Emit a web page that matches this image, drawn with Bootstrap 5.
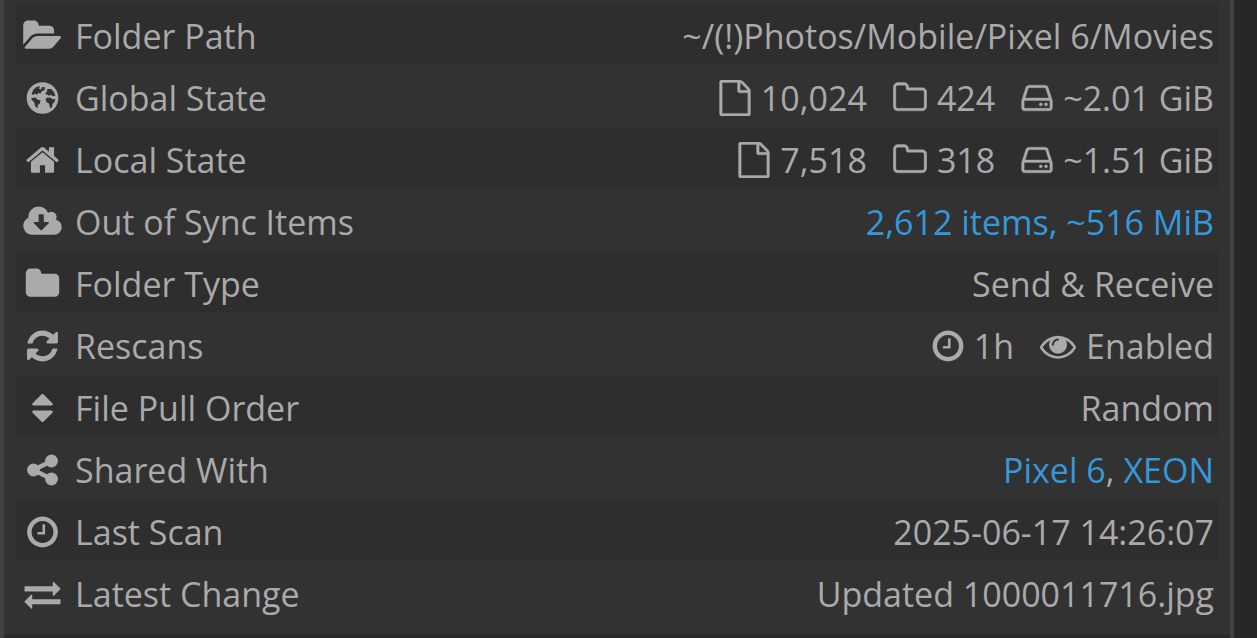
<!DOCTYPE html>
<html lang="en">
<head>
<meta charset="utf-8">
<meta name="viewport" content="width=device-width, initial-scale=1">
<title>Folder details</title>
<link href="https://cdn.jsdelivr.net/npm/bootstrap@5.3.0/dist/css/bootstrap.min.css" rel="stylesheet">
<style>
body { background: #272727; color: #aaa; font-family: "Open Sans", sans-serif; font-size: 34px; line-height: 46px; overflow: hidden; }
.folder-panel { background: #323232; border: solid #424242; border-width: 0 4px; margin-right: 23px; padding: 3px 11px 12px; }
.folder-panel + .panel-foot { border: solid #424242; border-width: 0 4px; margin-right: 23px; height: 4px; background: #2a2a2a; }
.details { --bs-table-color: #aaa; --bs-table-bg: transparent; --bs-table-striped-color: #aaa; --bs-table-striped-bg: #2e2e2e; color: #aaa; }
.details > :not(caption) > * > * { border: 0; padding: 10px 5px 6px; font-weight: 400; white-space: nowrap; }
.details > tbody > tr > th { padding-left: 8px; }
.details a { color: #3498db; text-decoration: none; }
.details svg { height: 36px; fill: currentColor; flex: none; }
.row-icon { width: 39px; margin-right: 13px; }
.stats { gap: 26px; }
.stats span { gap: 10px; }
.outlined { stroke: currentColor; stroke-width: 20px; }
</style>
</head>
<body>
<svg class="d-none" aria-hidden="true">
<symbol id="folder-open" viewBox="0 0 1920 1792"><path d="M1879 952q0 31-31 66l-336 396q-43 51-120.5 86.5t-143.5 35.5h-1088q-34 0-60.5-13t-26.5-43q0-31 31-66l336-396q43-51 120.5-86.5t143.5-35.5h1088q34 0 60.5 13t26.5 43zm-343-344v160h-832q-94 0-197 47.5t-164 119.5l-337 396-5 6q0-4-.5-12.5t-.5-12.5v-960q0-92 66-158t158-66h320q92 0 158 66t66 158v32h544q92 0 158 66t66 158z"/></symbol>
<symbol id="globe" viewBox="0 0 36 36"><path fill-rule="evenodd" d="M18 2.200a15.800 15.800 0 1 0 0 31.600a15.800 15.800 0 1 0 0-31.600zM7 14L9 9.500 12 7 15.500 6.200 14.500 9 16.500 9.500 17.500 7 20.500 7.300 20 10 17 11.500 16 13.500 13.500 13 12.500 15 10.500 13.500 9 15zM6.500 18.300L11 17.600 13 19.500 16 20.500 15.300 23.500 13.300 25 13 28.500 10.500 26 10 22.500 8 20.800zM20.500 14L22.500 11.200 23 9 26.500 9 29 11.500 31 15.500 28.500 16.300 26.500 14.800 24.500 15.800 22.500 14.500zM21 19L23 17.500 26 17.800 28 19.300 30.800 19 30 22 28 24 27.500 27.500 25.500 28 24.500 23.500 22 22.300z"/></symbol>
<symbol id="home" viewBox="0 0 1792 1792"><path d="M1472 992v480q0 26-19 45t-45 19h-384v-384h-256v384h-384q-26 0-45-19t-19-45v-480q0-1 .5-3t.5-3l575-474 575 474q1 2 1 6zm223-69l-62 74q-8 9-21 11h-3q-13 0-21-7l-692-577-692 577q-12 8-24 7-13-2-21-11l-62-74q-8-10-7-23.5t11-21.5l719-599q32-26 76-26t76 26l244 204v-195q0-14 9-23t23-9h192q14 0 23 9t9 23v408l219 182q10 8 11 21.5t-7 23.5z"/></symbol>
<symbol id="cloud" viewBox="-64 0 1920 1792"><path d="M1216 928q0-14-9-23t-23-9h-224v-352q0-13-9.500-22.500t-22.500-9.500h-192q-13 0-22.500 9.500t-9.500 22.500v352h-224q-13 0-22.500 9.500t-9.500 22.500q0 14 9 23l352 352q9 9 23 9t23-9l351-351q10-12 10-24zm640 224q0 159-112.500 271.500t-271.500 112.500h-1088q-185 0-316.500-131.500t-131.500-316.500q0-130 70-240t188-165q-2-30-2-43 0-212 150-362t362-150q156 0 285.500 87t188.500 231q71-62 166-62 106 0 181 75t75 181q0 76-41 138 130 31 213.500 135.500t83.500 238.500z"/></symbol>
<symbol id="folder" viewBox="0 0 1792 1792"><path d="M1728 608v704q0 92-66 158t-158 66h-1216q-92 0-158-66t-66-158v-960q0-92 66-158t158-66h320q92 0 158 66t66 158v32h672q92 0 158 66t66 158z"/></symbol>
<symbol id="refresh" viewBox="0 0 1792 1792"><path d="M1639 1056q0 5-1 7-64 268-268 434.500t-478 166.500q-146 0-282.500-55t-243.500-157l-129 129q-19 19-45 19t-45-19-19-45v-448q0-26 19-45t45-19h448q26 0 45 19t19 45-19 45l-137 137q71 66 161 102t187 36q134 0 250-65t186-179q11-17 53-117 8-23 30-23h192q13 0 22.500 9.500t9.500 22.500zm25-800v448q0 26-19 45t-45 19h-448q-26 0-45-19t-19-45 19-45l138-138q-148-137-349-137-134 0-250 65t-186 179q-11 17-53 117-8 23-30 23h-199q-13 0-22.500-9.500t-9.500-22.500v-7q65-268 270-434.500t480-166.500q146 0 284 55.500t245 156.500l130-129q19-19 45-19t45 19 19 45z"/></symbol>
<symbol id="sort" viewBox="0 0 1792 1792"><path d="M1408 1088q0 26-19 45l-448 448q-19 19-45 19t-45-19l-448-448q-19-19-19-45t19-45 45-19h896q26 0 45 19t19 45zm0-384q0 26-19 45t-45 19h-896q-26 0-45-19t-19-45 19-45l448-448q19-19 45-19t45 19l448 448q19 19 19 45z"/></symbol>
<symbol id="share" viewBox="0 0 1792 1792"><path d="M1344 1024q133 0 226.500 93.500t93.500 226.500-93.500 226.500-226.500 93.500-226.500-93.500-93.500-226.500q0-12 2-34l-360-180q-92 86-218 86-133 0-226.500-93.500t-93.500-226.500 93.500-226.500 226.500-93.500q126 0 218 86l360-180q-2-22-2-34 0-133 93.500-226.500t226.500-93.500 226.500 93.500 93.500 226.500-93.500 226.500-226.500 93.500q-126 0-218-86l-360 180q2 22 2 34t-2 34l360 180q92-86 218-86z"/></symbol>
<symbol id="clock" viewBox="128 0 1536 1792"><path d="M1024 544v448q0 14-9 23t-23 9h-320q-14 0-23-9t-9-23v-64q0-14 9-23t23-9h224v-352q0-14 9-23t23-9h64q14 0 23 9t9 23zm416 352q0-148-73-273t-198-198-273-73-273 73-198 198-73 273 73 273 198 198 273 73 273-73 198-198 73-273zm224 0q0 209-103 385.500t-279.500 279.500-385.500 103-385.500-103-279.500-279.500-103-385.500 103-385.500 279.500-279.500 385.500-103 385.500 103 279.500 279.500 103 385.500z"/></symbol>
<symbol id="exchange" viewBox="0 0 1792 1792"><path d="M1792 1184v192q0 13-9.500 22.500t-22.500 9.500h-1376v192q0 13-9.500 22.500t-22.500 9.500q-12 0-24-10l-319-320q-9-9-9-22 0-14 9-23l320-320q9-9 23-9 13 0 22.500 9.500t9.500 22.500v192h1376q13 0 22.500 9.500t9.500 22.500zm0-544q0 14-9 23l-320 320q-9 9-23 9-13 0-22.500-9.500t-9.500-22.500v-192h-1376q-13 0-22.500-9.500t-9.500-22.500v-192q0-13 9.500-22.500t22.500-9.500h1376v-192q0-14 9-23t23-9q12 0 24 10l319 319q9 9 9 23z"/></symbol>
<symbol id="eye" viewBox="0 0 1792 1792"><path d="M1664 960q-152-236-381-353 61 104 61 225 0 185-131.500 316.500t-316.500 131.500-316.500-131.500-131.500-316.500q0-121 61-225-229 117-381 353 133 205 333.500 326.500t434.500 121.500 434.500-121.500 333.500-326.500zm-720-384q0-20-14-34t-34-14q-125 0-214.500 89.500t-89.500 214.500q0 20 14 34t34 14 34-14 14-34q0-86 61-147t147-61q20 0 34-14t14-34zm848 384q0 34-20 69-140 230-376.500 368.500t-499.500 138.500-499.500-139-376.500-368q-20-35-20-69t20-69q140-229 376.500-368t499.500-139 499.500 139 376.500 368q20 35 20 69z"/></symbol>
<symbol id="file-o" viewBox="128 0 1536 1792"><path d="M1596 380q28 28 48 76t20 88v1152q0 40-28 68t-68 28h-1344q-40 0-68-28t-28-68v-1600q0-40 28-68t68-28h896q40 0 88 20t76 48zm-444-244v376h376q-10-29-22-41l-313-313q-12-12-41-22zm384 1528v-1024h-416q-40 0-68-28t-28-68v-416h-768v1536h1280z"/></symbol>
<symbol id="folder-o" viewBox="64 0 1664 1792"><path d="M1600 1312v-704q0-40-28-68t-68-28h-704q-40 0-68-28t-28-68v-64q0-40-28-68t-68-28h-320q-40 0-68 28t-28 68v960q0 40 28 68t68 28h1216q40 0 68-28t28-68zm128-704v704q0 92-66 158t-158 66h-1216q-92 0-158-66t-66-158v-960q0-92 66-158t158-66h320q92 0 158 66t66 158v32h672q92 0 158 66t66 158z"/></symbol>
<symbol id="hdd" viewBox="128 0 1536 1792"><path d="M1168 1216q0 33-23.500 56.500t-56.500 23.500-56.500-23.500-23.500-56.500 23.500-56.500 56.500-23.500 56.500 23.500 23.500 56.500zm256 0q0 33-23.500 56.500t-56.500 23.500-56.500-23.500-23.500-56.500 23.500-56.500 56.500-23.500 56.500 23.500 23.500 56.500zm112 160v-320q0-13-9.500-22.500t-22.500-9.500h-1216q-13 0-22.500 9.500t-9.500 22.500v320q0 13 9.500 22.500t22.500 9.500h1216q13 0 22.500-9.500t9.500-22.500zm-1230-480h1180l-157-482q-4-13-16-21.500t-26-8.500h-782q-14 0-26 8.500t-16 21.500zm1358 160v320q0 66-47 113t-113 47h-1216q-66 0-113-47t-47-113v-320q0-25 16-75l197-606q17-53 63-86t101-33h782q55 0 101 33t63 86l197 606q16 50 16 75z"/></symbol>
</svg>
<main class="folder-panel">
<table class="table table-striped details mb-0">
<tbody>
<tr><th scope="row"><div class="d-flex align-items-center"><svg class="row-icon"><use href="#folder-open"/></svg>Folder Path</div></th><td class="text-end">~/(!)Photos/Mobile/Pixel 6/Movies</td></tr>
<tr><th scope="row"><div class="d-flex align-items-center"><svg class="row-icon"><use href="#globe"/></svg>Global State</div></th><td><div class="stats d-flex justify-content-end"><span class="d-flex align-items-center"><svg class="outlined" width="32"><use href="#file-o"/></svg>10,024</span><span class="d-flex align-items-center"><svg class="outlined" width="34"><use href="#folder-o"/></svg>424</span><span class="d-flex align-items-center"><svg class="outlined" width="32"><use href="#hdd"/></svg>~2.01 GiB</span></div></td></tr>
<tr><th scope="row"><div class="d-flex align-items-center"><svg class="row-icon"><use href="#home"/></svg>Local State</div></th><td><div class="stats d-flex justify-content-end"><span class="d-flex align-items-center"><svg class="outlined" width="32"><use href="#file-o"/></svg>7,518</span><span class="d-flex align-items-center"><svg class="outlined" width="34"><use href="#folder-o"/></svg>318</span><span class="d-flex align-items-center"><svg class="outlined" width="32"><use href="#hdd"/></svg>~1.51 GiB</span></div></td></tr>
<tr><th scope="row"><div class="d-flex align-items-center"><svg class="row-icon"><use href="#cloud"/></svg>Out of Sync Items</div></th><td class="text-end"><a href="#">2,612 items, ~516 MiB</a></td></tr>
<tr><th scope="row"><div class="d-flex align-items-center"><svg class="row-icon"><use href="#folder"/></svg>Folder Type</div></th><td class="text-end">Send &amp; Receive</td></tr>
<tr><th scope="row"><div class="d-flex align-items-center"><svg class="row-icon"><use href="#refresh"/></svg>Rescans</div></th><td><div class="stats d-flex justify-content-end"><span class="d-flex align-items-center"><svg width="32"><use href="#clock"/></svg>1h</span><span class="d-flex align-items-center"><svg width="36"><use href="#eye"/></svg>Enabled</span></div></td></tr>
<tr><th scope="row"><div class="d-flex align-items-center"><svg class="row-icon"><use href="#sort"/></svg>File Pull Order</div></th><td class="text-end">Random</td></tr>
<tr><th scope="row"><div class="d-flex align-items-center"><svg class="row-icon"><use href="#share"/></svg>Shared With</div></th><td class="text-end"><a href="#">Pixel 6</a>, <a href="#">XEON</a></td></tr>
<tr><th scope="row"><div class="d-flex align-items-center"><svg class="row-icon"><use href="#clock"/></svg>Last Scan</div></th><td class="text-end">2025-06-17 14:26:07</td></tr>
<tr><th scope="row"><div class="d-flex align-items-center"><svg class="row-icon"><use href="#exchange"/></svg>Latest Change</div></th><td class="text-end">Updated 1000011716.jpg</td></tr>
</tbody>
</table>
</main>
<div class="panel-foot"></div>
<script src="https://cdn.jsdelivr.net/npm/bootstrap@5.3.0/dist/js/bootstrap.bundle.min.js"></script>
</body>
</html>
